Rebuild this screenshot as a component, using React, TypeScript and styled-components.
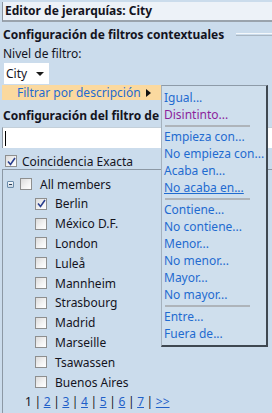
import React from 'react';
import styled, { createGlobalStyle } from 'styled-components';

const GlobalStyle = createGlobalStyle`
  html, body {
    margin: 0;
    padding: 0;
    background-color: #cbdcec;
  }
  body {
    font-family: "Noto Sans", "Liberation Sans", sans-serif;
    font-size: 12px;
    color: #14141e;
    width: 272px;
    height: 413px;
    overflow: hidden;
  }
`;

const Page = styled.div`
  position: relative;
  width: 272px;
  height: 413px;
  overflow: hidden;
`;

const Header = styled.div`
  margin: 2px 0 0 2px;
  height: 18px;
  padding-left: 2px;
  background-color: #edf2f8;
  border-left: 1px solid #8a949e;
  border-bottom: 2px solid #9aa3ac;
  font-weight: 700;
  line-height: 18px;
  white-space: nowrap;
`;

const SectionTitle = styled.div<{ top: number; width?: number }>`
  display: flex;
  align-items: center;
  gap: 12px;
  margin: ${p => p.top}px 0 0 3px;
  height: 16px;
  width: ${p => (p.width ? `${p.width}px` : 'auto')};
  font-weight: 700;
  white-space: nowrap;
  overflow: hidden;
`;

const TitleRule = styled.div`
  flex: 1;
  height: 1px;
  border-top: 1px solid #f4f8fb;
  border-bottom: 1px solid #a9b6c2;
  margin-top: 1px;
`;

const Label = styled.div`
  margin: 4px 0 0 3px;
  line-height: 15px;
`;

const SelectWrap = styled.div`
  position: relative;
  margin: 2px 0 0 4px;
`;

const Select = styled.div`
  display: flex;
  align-items: center;
  justify-content: space-between;
  width: 43px;
  height: 21px;
  padding-left: 2px;
  background-color: #ffffff;
`;

const Caret = styled.span`
  width: 0;
  height: 0;
  margin-right: 5px;
  border-left: 4px solid transparent;
  border-right: 4px solid transparent;
  border-top: 4px solid #1a1a1a;
`;

const MenuRow = styled.div`
  position: absolute;
  top: 22px;
  left: -2px;
  width: 159px;
  height: 15px;
  display: flex;
  align-items: center;
  background-color: #fbd99f;
  color: #1f6bd0;
  padding-left: 15px;
  box-sizing: border-box;
  z-index: 2;
`;

const MenuArrow = styled.span`
  margin-left: 5px;
  width: 0;
  height: 0;
  border-top: 4px solid transparent;
  border-bottom: 4px solid transparent;
  border-left: 5px solid #111111;
`;

const SubMenu = styled.div`
  position: absolute;
  top: 22px;
  left: 157px;
  width: 102px;
  padding: 3px 0 3px 2px;
  background-color: #cfdfed;
  border-top: 1px solid #8e9ba8;
  border-left: 1px solid #a4b1bd;
  border-right: 2px solid #3f4851;
  border-bottom: 2px solid #3f4851;
  overflow: hidden;
  z-index: 3;
`;

const SubItem = styled.div<{ visited?: boolean; hover?: boolean }>`
  height: 17px;
  line-height: 17px;
  white-space: nowrap;
  color: ${p => (p.visited ? '#8c1f9c' : '#1f6bd0')};
  text-decoration: ${p => (p.hover ? 'underline' : 'none')};
`;

const SubSeparator = styled.div`
  height: 2px;
  width: 85px;
  margin: 2px 0 1px 1px;
  background-color: #aeb4ba;
`;

const TextInput = styled.div`
  margin: 4px 0 0 2px;
  height: 20px;
  background-color: #ffffff;
  border-left: 1px solid #8a949e;
  border-top: 1px solid #c4d0da;
  display: flex;
  align-items: center;
`;

const TextCursor = styled.span`
  width: 1px;
  height: 15px;
  margin-left: 2px;
  background-color: #000000;
`;

const CheckRow = styled.div<{ indent: number; height: number; top?: number }>`
  display: flex;
  align-items: center;
  height: ${p => p.height}px;
  margin-top: ${p => p.top ?? 0}px;
  padding-left: ${p => p.indent}px;
  white-space: nowrap;
`;

const Box = styled.span<{ gap: number }>`
  display: inline-flex;
  align-items: center;
  justify-content: center;
  width: 10px;
  height: 10px;
  margin-right: ${p => p.gap}px;
  border: 1px solid #8e8f8f;
  background: linear-gradient(135deg, #dcdcdc 0%, #f4f4f4 60%, #ffffff 100%);
  flex-shrink: 0;
`;

const TreePanel = styled.div`
  margin: -1px 0 0 2px;
  padding-top: 4px;
  height: 240px;
  border-top: 1px solid #8c98a4;
  border-left: 1px solid #8c98a4;
`;

const Expander = styled.span`
  display: inline-flex;
  align-items: center;
  justify-content: center;
  width: 5px;
  height: 5px;
  margin-right: 6px;
  border: 1px solid #6a8cab;
  border-radius: 1px;
  background: linear-gradient(#f6f9fc, #c9d6e3);
  flex-shrink: 0;
`;

const ExpanderMinus = styled.span`
  width: 3px;
  height: 1px;
  background-color: #2a3c52;
`;

const Pager = styled.div`
  display: flex;
  gap: 2.6px;
  margin: 2px 0 0 22px;
  line-height: 16px;
`;

const PageLink = styled.a`
  color: #1f5fc8;
  text-decoration: underline;
`;

const Check = () => (
  <svg width="9" height="9" viewBox="0 0 9 9">
    <path d="M1 4.5 L3.5 7.5 L8 1" fill="none" stroke="#2a3f8f" strokeWidth="1.6" />
  </svg>
);

const cities = [
  'Berlin',
  'México D.F.',
  'London',
  'Luleå',
  'Mannheim',
  'Strasbourg',
  'Madrid',
  'Marseille',
  'Tsawassen',
  'Buenos Aires',
];

const subItems: (string | null)[] = [
  'Igual...',
  'Disintinto...',
  null,
  'Empieza con...',
  'No empieza con...',
  'Acaba en...',
  'No acaba en...',
  null,
  'Contiene...',
  'No contiene...',
  'Menor...',
  'No menor...',
  'Mayor...',
  'No mayor...',
  null,
  'Entre...',
  'Fuera de...',
];

const App: React.FC = () => {
  return (
    <Page>
      <GlobalStyle />
      <Header>Editor de jerarquías: City</Header>

      <SectionTitle top={4}>
        Configuración de filtros contextuales
        <TitleRule />
      </SectionTitle>

      <Label>Nivel de filtro:</Label>

      <SelectWrap>
        <Select>
          City
          <Caret />
        </Select>

        <MenuRow>
          Filtrar por descripción
          <MenuArrow />
        </MenuRow>

        <SubMenu>
          {subItems.map((item, i) =>
            item === null ? (
              <SubSeparator key={i} />
            ) : (
              <SubItem
                key={i}
                visited={item === 'Disintinto...'}
                hover={item === 'No acaba en...'}
              >
                {item}
              </SubItem>
            )
          )}
        </SubMenu>
      </SelectWrap>

      <SectionTitle top={23} width={157}>
        Configuración del filtro de miembros
      </SectionTitle>

      <TextInput>
        <TextCursor />
      </TextInput>

      <CheckRow indent={5} height={18} top={4}>
        <Box gap={5}>
          <Check />
        </Box>
        Coincidencia Exacta
      </CheckRow>

      <TreePanel>
        <CheckRow indent={4} height={20}>
          <Expander>
            <ExpanderMinus />
          </Expander>
          <Box gap={8} />
          All members
        </CheckRow>
        {cities.map((city, i) => (
          <CheckRow key={city} indent={32} height={19.8}>
            <Box gap={8}>{i === 0 && <Check />}</Box>
            {city}
          </CheckRow>
        ))}
        <Pager>
          <span>1</span>|<PageLink>2</PageLink>|<PageLink>3</PageLink>|
          <PageLink>4</PageLink>|<PageLink>5</PageLink>|<PageLink>6</PageLink>|
          <PageLink>7</PageLink>|<PageLink>&gt;&gt;</PageLink>
        </Pager>
      </TreePanel>
    </Page>
  );
};

export default App;
